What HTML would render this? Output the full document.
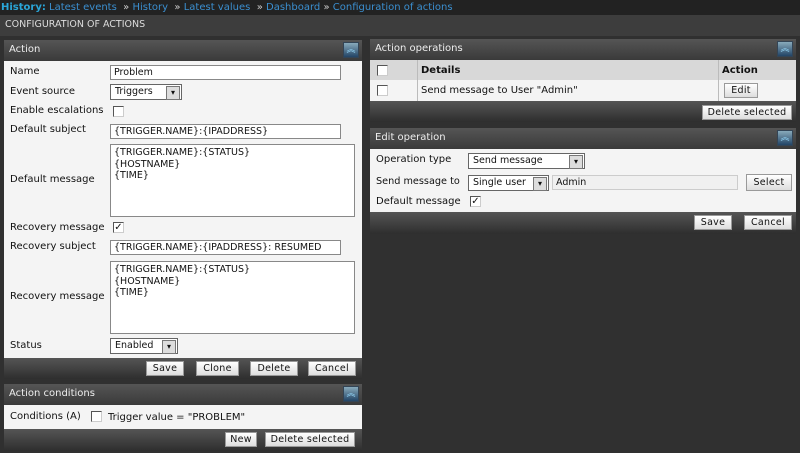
<!DOCTYPE html><html><head><style>
*{margin:0;padding:0;box-sizing:border-box}
body{width:800px;height:453px;background:#303030;font-family:"DejaVu Sans","Liberation Sans",sans-serif;font-size:10px;color:#111;position:relative;overflow:hidden}
.a{position:absolute}
.hd{position:absolute;height:21px;background:linear-gradient(#555,#3a3a3a);color:#eee;font-size:10px;line-height:20px;padding-left:5px}
.bd{position:absolute;background:#f4f4f4}
.ft{position:absolute;height:21px;background:linear-gradient(#555,#2e2e2e)}
.ic{position:absolute;right:3px;top:2px;width:16px;height:16px;background:linear-gradient(#8ab,#246);border:1px solid #345;color:#9df;font-size:9px;line-height:14px;text-align:center}
.btn{position:absolute;height:15px;background:linear-gradient(#fff,#ddd);border:1px solid #999;font-size:9.5px;line-height:13px;text-align:center;letter-spacing:.3px}
.lb{position:absolute;font-size:10px}
.in{position:absolute;height:15px;background:#fff;border:1px solid #888;font-size:9.5px;line-height:13px;padding-left:3px}
.ta{position:absolute;background:#fff;border:1px solid #888;font-size:9.5px;line-height:11.5px;padding:2px 3px}
.sel{position:absolute;height:16px;background:#fff;border:1px solid #666;font-size:9.5px;line-height:14px;padding-left:4px}
.sel:after{content:"▾";position:absolute;right:1px;top:1px;width:12px;height:12px;background:#ddd;border:1px solid #777;font-size:8px;line-height:11px;text-align:center}
.cb{position:absolute;width:11px;height:11px;border:1px solid #555;border-right-color:#ccc;border-bottom-color:#ccc;background:#fff;font-size:10px;line-height:9px;text-align:center}
</style></head><body>
<div class="a" style="left:0;top:0;width:800px;height:15px;background:#222;font-size:10px;line-height:15px;color:#3b8fd0;padding-left:1px;white-space:nowrap"><b style="color:#2aa6d8">History:</b> Latest events &nbsp;<span style="color:#ccc">»</span> History &nbsp;<span style="color:#ccc">»</span> Latest values &nbsp;<span style="color:#ccc">»</span> Dashboard <span style="color:#ccc">»</span> Configuration of actions</div>
<div class="a" style="left:0;top:15px;width:800px;height:21px;background:#3d3d3d;color:#ddd;font-size:9.5px;line-height:20px;padding-left:5px">CONFIGURATION OF ACTIONS</div>

<div class="hd" style="left:4px;top:40px;width:358px">Action<div class="ic">︽</div></div>
<div class="bd" style="left:4px;top:61px;width:358px;height:297px"></div>
<div class="lb" style="left:10px;top:66px">Name</div><div class="in" style="left:110px;top:65px;width:231px">Problem</div>
<div class="lb" style="left:10px;top:86px">Event source</div><div class="sel" style="left:110px;top:84px;width:72px">Triggers</div>
<div class="lb" style="left:10px;top:105px">Enable escalations</div><div class="cb" style="left:113px;top:106px"></div>
<div class="lb" style="left:10px;top:124px">Default subject</div><div class="in" style="left:110px;top:124px;width:231px">{TRIGGER.NAME}:{IPADDRESS}</div>
<div class="ta" style="left:110px;top:144px;width:245px;height:73px">{TRIGGER.NAME}:{STATUS}<br>{HOSTNAME}<br>{TIME}</div>
<div class="lb" style="left:10px;top:174px">Default message</div>
<div class="lb" style="left:10px;top:222px">Recovery message</div><div class="cb" style="left:113px;top:222px">✓</div>
<div class="lb" style="left:10px;top:241px">Recovery subject</div><div class="in" style="left:110px;top:240px;width:231px">{TRIGGER.NAME}:{IPADDRESS}: RESUMED</div>
<div class="ta" style="left:110px;top:261px;width:245px;height:73px">{TRIGGER.NAME}:{STATUS}<br>{HOSTNAME}<br>{TIME}</div>
<div class="lb" style="left:10px;top:291px">Recovery message</div>
<div class="lb" style="left:10px;top:340px">Status</div><div class="sel" style="left:110px;top:338px;width:68px">Enabled</div>
<div class="ft" style="left:4px;top:358px;width:358px"></div>
<div class="btn" style="left:146px;top:361px;width:38px">Save</div>
<div class="btn" style="left:196px;top:361px;width:43px">Clone</div>
<div class="btn" style="left:250px;top:361px;width:48px">Delete</div>
<div class="btn" style="left:308px;top:361px;width:48px">Cancel</div>

<div class="hd" style="left:4px;top:384px;width:358px">Action conditions<div class="ic">︽</div></div>
<div class="bd" style="left:4px;top:405px;width:358px;height:24px"></div>
<div class="lb" style="left:10px;top:411px">Conditions (A)</div><div class="cb" style="left:91px;top:411px"></div>
<div class="lb" style="left:108px;top:412px">Trigger value = "PROBLEM"</div>
<div class="ft" style="left:4px;top:429px;width:358px;height:22px"></div>
<div class="btn" style="left:225px;top:432px;width:32px">New</div>
<div class="btn" style="left:265px;top:432px;width:90px">Delete selected</div>

<div class="hd" style="left:370px;top:39px;width:426px">Action operations<div class="ic">︽</div></div>
<div class="a" style="left:370px;top:60px;width:426px;height:20px;background:#d8d8d8"></div>
<div class="a" style="left:370px;top:80px;width:426px;height:21px;background:#f4f4f4"></div>
<div class="a" style="left:417px;top:60px;width:1px;height:41px;background:#bbb"></div>
<div class="a" style="left:718px;top:60px;width:1px;height:41px;background:#bbb"></div>
<div class="cb" style="left:377px;top:65px"></div><div class="cb" style="left:377px;top:85px"></div>
<div class="lb" style="left:421px;top:65px;font-weight:bold">Details</div>
<div class="lb" style="left:722px;top:65px;font-weight:bold">Action</div>
<div class="lb" style="left:421px;top:85px">Send message to User "Admin"</div>
<div class="btn" style="left:724px;top:83px;width:34px">Edit</div>
<div class="ft" style="left:370px;top:101px;width:426px"></div>
<div class="btn" style="left:702px;top:105px;width:90px">Delete selected</div>

<div class="hd" style="left:370px;top:128px;width:426px">Edit operation<div class="ic">︽</div></div>
<div class="bd" style="left:370px;top:149px;width:426px;height:63px"></div>
<div class="lb" style="left:376px;top:154px">Operation type</div><div class="sel" style="left:468px;top:153px;width:117px">Send message</div>
<div class="lb" style="left:376px;top:176px;font-size:9.7px">Send message to</div><div class="sel" style="left:468px;top:175px;width:81px">Single user</div>
<div class="in" style="left:552px;top:175px;width:186px;background:#f0f0f0;border-color:#ccc">Admin</div>
<div class="btn" style="left:746px;top:174px;width:46px;height:17px;line-height:15px">Select</div>
<div class="lb" style="left:376px;top:196px">Default message</div><div class="cb" style="left:470px;top:196px">✓</div>
<div class="ft" style="left:370px;top:212px;width:426px;height:22px"></div>
<div class="btn" style="left:694px;top:215px;width:38px">Save</div>
<div class="btn" style="left:744px;top:215px;width:48px">Cancel</div>
</body></html>
